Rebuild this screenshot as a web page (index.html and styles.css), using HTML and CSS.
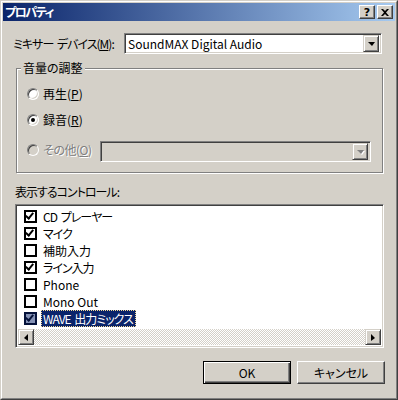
FILE: index.html
```html
<!DOCTYPE html>
<html lang="ja">
<head>
  <meta charset="UTF-8" />
  <title>プロパティ</title>
  <link rel="stylesheet" href="styles.css">
</head>
<body>
  <div class="window">
    <div class="frame">
      <div class="titlebar">
        <span class="title">プロパティ</span>
        <div class="caption-btns">
          <div class="cap-btn help">?</div>
          <div class="cap-btn">
            <svg width="8" height="7" viewBox="0 0 8 7"><path d="M0 0h2l2 2 2-2h2L5 3.5 8 7H6L4 5 2 7H0l3-3.5z" fill="#000"/></svg>
          </div>
        </div>
      </div>

      <div class="content">
        <div class="device-row">
          <span class="device-label jp">ミキサー デバイス(<u>M</u>):</span>
          <div class="combo">
            <span class="combo-text">SoundMAX Digital Audio</span>
            <div class="combo-btn"><span class="arrow-down"></span></div>
          </div>
        </div>

        <div class="group">
          <span class="group-label">音量の調整</span>
          <div class="radio-row first">
            <span class="radio"></span>
            <span>再生(<u>P</u>)</span>
          </div>
          <div class="radio-row">
            <span class="radio checked"></span>
            <span>録音(<u>R</u>)</span>
          </div>
          <div class="radio-row other">
            <span class="radio disabled"></span>
            <span class="disabled-text">その他(<u>O</u>)</span>
            <div class="combo combo-disabled">
              <span class="combo-text"></span>
              <div class="combo-btn"><span class="arrow-down gray"></span></div>
            </div>
          </div>
        </div>

        <div class="list-label jp">表示するコントロール:</div>

        <div class="listbox">
          <div class="items">
            <div class="item"><span class="check on"></span><span class="item-text jp">CD プレーヤー</span></div>
            <div class="item"><span class="check on"></span><span class="item-text jp">マイク</span></div>
            <div class="item"><span class="check"></span><span class="item-text">補助入力</span></div>
            <div class="item"><span class="check on"></span><span class="item-text jp">ライン入力</span></div>
            <div class="item"><span class="check"></span><span class="item-text">Phone</span></div>
            <div class="item"><span class="check"></span><span class="item-text">Mono Out</span></div>
            <div class="item selected"><span class="check on"></span><span class="item-text jp">WAVE 出力ミックス</span></div>
          </div>
          <div class="hscroll">
            <div class="sb-btn"><span class="arrow-left"></span></div>
            <div class="sb-track"></div>
            <div class="sb-btn"><span class="arrow-right"></span></div>
          </div>
        </div>

        <div class="buttons">
          <div class="push default">OK</div>
          <div class="push">キャンセル</div>
        </div>
      </div>
    </div>
  </div>
</body>
</html>
```

FILE: styles.css
```css
* {
  margin: 0;
  padding: 0;
  box-sizing: border-box;
}

body {
  font-family: "Noto Sans CJK JP", sans-serif;
  font-size: 12px;
  line-height: 12px;
  font-feature-settings: "palt";
  color: #000;
  background: #d4d0c8;
}

u {
  text-decoration: underline;
  text-underline-offset: 1px;
}

/* kana runs are narrower in the original UI font */
.jp {
  letter-spacing: -1px;
  word-spacing: 2px;
}

/* Window frame */
.window {
  width: 398px;
  height: 400px;
  border: 1px solid;
  border-color: #d4d0c8 #404040 #404040 #d4d0c8;
  background: #d4d0c8;
}

.frame {
  height: 100%;
  border: 1px solid;
  border-color: #fff #808080 #808080 #fff;
  padding: 1px;
  display: flex;
  flex-direction: column;
}

.titlebar {
  height: 18px;
  flex: none;
  background: linear-gradient(to right, #0a246a, #a6caf0);
  display: flex;
  align-items: center;
  justify-content: space-between;
  padding: 0 2px;
}

.title {
  color: #fff;
  font-weight: bold;
  font-size: 12px;
  letter-spacing: -1.5px;
}

.caption-btns {
  display: flex;
  gap: 2px;
}

.cap-btn {
  width: 16px;
  height: 14px;
  background: #d4d0c8;
  border: 1px solid;
  border-color: #fff #404040 #404040 #fff;
  box-shadow: inset -1px -1px 0 #808080;
  display: flex;
  align-items: center;
  justify-content: center;
}

.help {
  font-family: "DejaVu Sans", sans-serif;
  font-weight: bold;
  font-size: 11px;
  line-height: 11px;
}

/* Content */
.content {
  flex: 1;
  display: flex;
  flex-direction: column;
}

.device-row {
  display: flex;
  align-items: center;
  margin: 12px 13px 0 10px;
}

.device-label {
  flex: none;
  white-space: nowrap;
}

.combo {
  width: 258px;
  height: 21px;
  flex: none;
  background: #fff;
  border: 1px solid;
  border-color: #808080 #fff #fff #808080;
  box-shadow: inset 1px 1px 0 #404040, inset -1px -1px 0 #d4d0c8;
  display: flex;
  align-items: center;
  padding: 2px;
  margin-left: auto;
}

.combo-text {
  flex: 1;
  padding-left: 1px;
  white-space: nowrap;
}

.combo-btn {
  width: 16px;
  height: 17px;
  background: #d4d0c8;
  border: 1px solid;
  border-color: #d4d0c8 #404040 #404040 #d4d0c8;
  box-shadow: inset 1px 1px 0 #fff, inset -1px -1px 0 #808080;
  display: flex;
  align-items: center;
  justify-content: center;
}

.arrow-down {
  width: 0;
  height: 0;
  border-left: 4px solid transparent;
  border-right: 3px solid transparent;
  border-top: 4px solid #000;
  margin-top: 1px;
}

.arrow-down.gray {
  border-top-color: #808080;
  filter: drop-shadow(1px 1px 0 #fff);
}

/* Group box */
.group {
  position: relative;
  flex: none;
  margin: 14px 0 0 13px;
  width: 367px;
  height: 105px;
  border: 1px solid #808080;
  box-shadow: inset 1px 1px 0 #fff, 1px 1px 0 #fff;
  padding: 0 11px 0 10px;
}

.group-label {
  position: absolute;
  top: -7px;
  left: 4px;
  padding: 0 2px;
  background: #d4d0c8;
}

.radio-row {
  display: flex;
  align-items: center;
  gap: 4px;
  height: 16px;
  margin-top: 10px;
}

.radio-row.first {
  margin-top: 17px;
}

.radio-row.other {
  height: 21px;
  margin-top: 13px;
}

.radio-row.other .radio,
.radio-row.other .disabled-text {
  margin-top: -4px;
}

.radio {
  width: 12px;
  height: 12px;
  flex: none;
  border-radius: 50%;
  border: 1px solid;
  border-color: #808080 #fff #fff #808080;
  box-shadow: inset 1px 1px 0 #404040, inset -1px -1px 0 #d4d0c8;
  background: #fff;
  display: flex;
  align-items: center;
  justify-content: center;
}

.radio.checked::after {
  content: "";
  width: 4px;
  height: 4px;
  border-radius: 50%;
  background: #000;
}

.radio.disabled {
  background: #d4d0c8;
}

.disabled-text {
  color: #808080;
  text-shadow: 1px 1px 0 #fff;
  letter-spacing: -0.5px;
}

.combo-disabled {
  width: 271px;
  background: #d4d0c8;
}

/* Controls list */
.list-label {
  margin: 13px 0 0 12px;
}

.listbox {
  flex: none;
  margin: 6px 0 0 12px;
  width: 369px;
  height: 144px;
  background: #fff;
  border: 1px solid;
  border-color: #808080 #fff #fff #808080;
  box-shadow: inset 1px 1px 0 #404040, inset -1px -1px 0 #d4d0c8;
  padding: 2px;
  display: flex;
  flex-direction: column;
}

.items {
  flex: 1;
  padding: 1px 0 0 6px;
}

.item {
  height: 17px;
  display: flex;
  align-items: center;
}

.check {
  width: 13px;
  height: 13px;
  border: 2px solid #000;
  background: #fff;
  margin-right: 4px;
  position: relative;
}

.check.on::after {
  content: "";
  position: absolute;
  left: 1px;
  top: -1px;
  width: 3px;
  height: 6px;
  border: solid #000;
  border-width: 0 2px 2px 0;
  transform: rotate(40deg);
}

.item-text {
  height: 17px;
  line-height: 17px;
  padding: 0 3px 0 2px;
}

.item.selected .item-text {
  background: #0a246a;
  color: #fff;
  outline: 1px dotted #f5db95;
  outline-offset: -1px;
}

.item.selected .check {
  background: #8592b5;
  border-color: #05123a;
}

.item.selected .check::after {
  border-color: #05123a;
}

.hscroll {
  height: 16px;
  display: flex;
}

.sb-btn {
  width: 16px;
  height: 16px;
  background: #d4d0c8;
  border: 1px solid;
  border-color: #d4d0c8 #404040 #404040 #d4d0c8;
  box-shadow: inset 1px 1px 0 #fff, inset -1px -1px 0 #808080;
  display: flex;
  align-items: center;
  justify-content: center;
}

.sb-track {
  flex: 1;
  background: repeating-conic-gradient(#fff 0 25%, #d4d0c8 0 50%) 0 0 / 2px 2px;
}

.arrow-left {
  width: 0;
  height: 0;
  border-top: 4px solid transparent;
  border-bottom: 3px solid transparent;
  border-right: 4px solid #000;
}

.arrow-right {
  width: 0;
  height: 0;
  border-top: 4px solid transparent;
  border-bottom: 3px solid transparent;
  border-left: 4px solid #000;
}

/* Buttons */
.buttons {
  display: flex;
  justify-content: flex-end;
  gap: 6px;
  margin: 13px 10px 0 0;
}

.push {
  width: 88px;
  height: 23px;
  border: 1px solid;
  border-color: #fff #404040 #404040 #fff;
  box-shadow: inset -1px -1px 0 #808080;
  display: flex;
  align-items: center;
  justify-content: center;
}

.push.default {
  border: 1px solid #000;
  box-shadow: inset 1px 1px 0 #fff, inset -1px -1px 0 #404040, inset -2px -2px 0 #808080;
}
```
